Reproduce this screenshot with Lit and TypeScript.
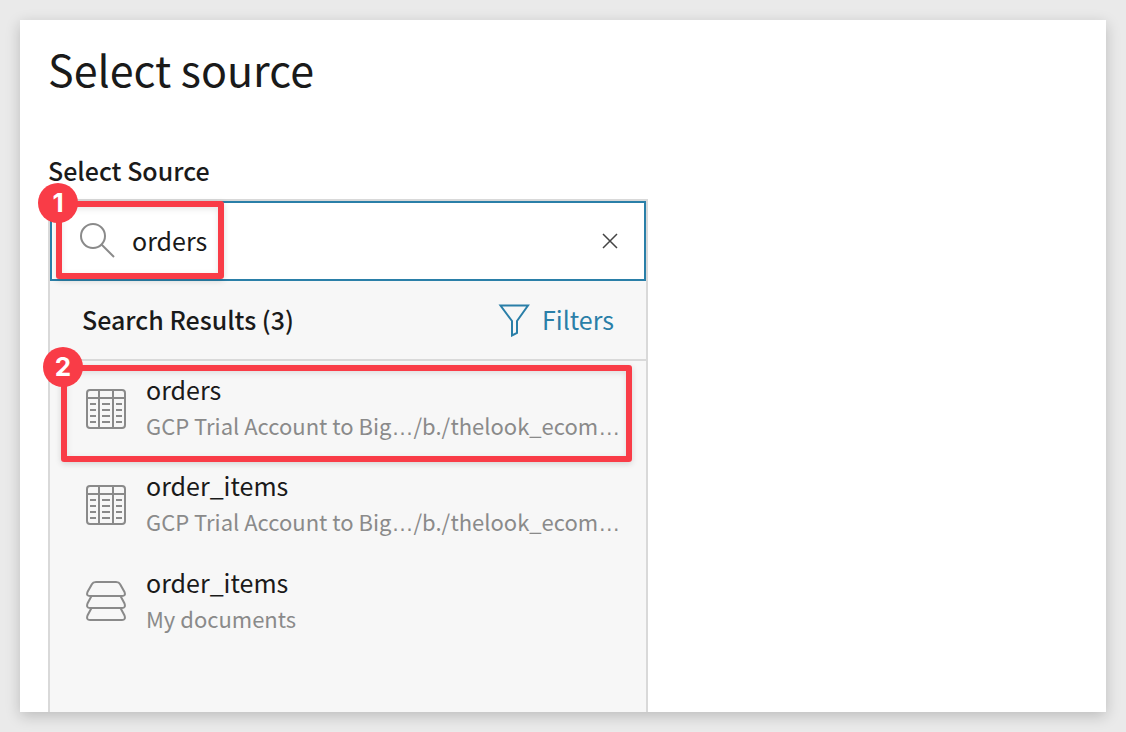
import { LitElement, html, css, svg } from "lit";
import { customElement, property, state } from "lit/decorators.js";

type Kind = "table" | "dataset";

interface Source {
  kind: Kind;
  name: string;
  location: string;
}

const SOURCES: Source[] = [
  { kind: "table", name: "orders", location: "GCP Trial Account to Big…/b./thelook_ecom…" },
  { kind: "table", name: "order_items", location: "GCP Trial Account to Big…/b./thelook_ecom…" },
  { kind: "dataset", name: "order_items", location: "My documents" },
];

const tableIcon = svg`
  <rect x="1" y="1" width="38" height="38" rx="3" />
  <path d="M1 9H39M13 1V39M27 1V39" />
  <path d="M4 15H10M4 21H10M4 27H10M4 33H10M16 15H24M16 21H24M16 27H24M16 33H24M30 15H36M30 21H36M30 27H36M30 33H36" />`;

const datasetIcon = svg`
  <path d="M10 1H30Q33 1 34 3L38.500 11Q40 15 36 15H4Q0 15 1.500 11L6 3Q7 1 10 1Z" />
  <path d="M5.500 15L1.500 22.500Q0 27 4 27H36Q40 27 38.500 22.500L34.500 15" />
  <path d="M5.500 27L1.500 34.500Q0 39 4 39H36Q40 39 38.500 34.500L34.500 27" />`;

@customElement("source-row")
export class SourceRow extends LitElement {
  @property({ attribute: false }) source!: Source;

  static styles = css`
    :host { display: block; }
    .row {
      display: flex;
      align-items: center;
      gap: 20px;
      width: 100%;
      height: 96px;
      box-sizing: border-box;
      padding: 0 28px 0 36px;
      border: 0;
      background: none;
      font: inherit;
      color: inherit;
      text-align: left;
      cursor: pointer;
    }
    .icon { flex: none; width: 40px; height: 40px; fill: none; stroke: #8a8a8a; stroke-width: 2; }
    .text { flex: 1; min-width: 0; display: flex; flex-direction: column; padding-bottom: 2px; }
    .name { font-size: 25px; line-height: 36px; }
    .location {
      font-size: 22px;
      line-height: 36px;
      color: #8a8a8a;
      white-space: nowrap;
    }
    .dots { font-family: "Liberation Sans", sans-serif; }
  `;

  render() {
    const parts = this.source.location.split(/(…)/);
    return html`
      <button class="row" type="button">
        <svg class="icon" viewBox="0 0 40 40" aria-hidden="true">
          ${this.source.kind === "table" ? tableIcon : datasetIcon}
        </svg>
        <span class="text">
          <span class="name">${this.source.name}</span>
          <span class="location">${parts.map((p) => (p === "…" ? html`<span class="dots">…</span>` : p))}</span>
        </span>
      </button>
    `;
  }
}

@customElement("app-root")
export class AppRoot extends LitElement {
  @state() private query = "orders";

  static styles = css`
    :host {
      display: flex;
      box-sizing: border-box;
      min-height: 100vh;
      padding: 20px;
      background: #eaeaea;
      color: #1a1a1a;
      font-family: "Noto Sans CJK SC", sans-serif;
    }
    .card {
      flex: 1;
      display: flex;
      flex-direction: column;
      min-width: 0;
      padding: 18px 28px 0;
      background: #fff;
      box-shadow: 0 4px 14px rgba(0, 0, 0, 0.2);
    }
    .title { margin: 0; font-size: 43px; line-height: 60px; font-weight: 400; }
    .label { margin-top: 54px; font-size: 25px; line-height: 36px; font-weight: 500; }
    .picker {
      position: relative;
      flex: 1;
      display: flex;
      flex-direction: column;
      margin-top: 11px;
      width: 100%;
      max-width: 600px;
      box-sizing: border-box;
      border: 2px solid #d9d9d9;
      border-bottom: 0;
      background: #f7f7f7;
    }
    .search {
      display: flex;
      align-items: center;
      gap: 16px;
      height: 80px;
      box-sizing: border-box;
      padding: 0 24px 0 28px;
      border: 2px solid #2a7fa8;
      background: #fff;
    }
    .lens { flex: none; width: 36px; height: 36px; fill: none; stroke: #8a8a8a; stroke-width: 2; }
    .field {
      flex: 1;
      min-width: 0;
      padding: 0 0 2px;
      border: 0;
      outline: 0;
      background: none;
      color: inherit;
      font: inherit;
      font-size: 25px;
      line-height: 36px;
    }
    .clear { display: flex; padding: 2px; border: 0; background: none; cursor: pointer; }
    .cross { width: 16px; height: 16px; fill: none; stroke: #444; stroke-width: 1.5; }
    .head {
      display: flex;
      align-items: center;
      justify-content: space-between;
      height: 80px;
      box-sizing: border-box;
      padding: 0 32px;
      border-bottom: 2px solid #d9d9d9;
    }
    .count { margin: 0; padding-bottom: 2px; font-size: 25px; line-height: 36px; font-weight: 500; }
    .filters {
      display: flex;
      align-items: center;
      gap: 12px;
      padding: 0;
      border: 0;
      background: none;
      color: #2a7fa8;
      font: inherit;
      font-size: 25px;
      line-height: 36px;
      cursor: pointer;
    }
    .filters-text { padding-bottom: 2px; }
    .funnel { width: 32px; height: 34px; fill: none; stroke: currentColor; stroke-width: 2; }
    .list { list-style: none; margin: 0; padding: 0; }
    .callout {
      position: absolute;
      box-sizing: border-box;
      border: 6px solid #f93c47;
      border-radius: 3px;
      box-shadow: 0 2px 6px rgba(0, 0, 0, 0.14), inset 0 2px 6px rgba(0, 0, 0, 0.1);
      pointer-events: none;
    }
    .first { left: 6px; top: 0; width: 168px; height: 78px; }
    .second { left: 11px; right: 14px; top: 164px; height: 97px; }
    .badge {
      position: absolute;
      left: -24px;
      top: -24px;
      width: 40px;
      height: 40px;
      border-radius: 50%;
      background: #f93c47;
      color: #fff;
      font: 700 26px/40px Inter, sans-serif;
      text-align: center;
    }
  `;

  private onInput(e: Event) {
    this.query = (e.target as HTMLInputElement).value;
  }

  private clear() {
    this.query = "";
  }

  render() {
    return html`
      <main class="card">
        <h1 class="title">Select source</h1>
        <label class="label" for="source">Select Source</label>
        <div class="picker">
          <div class="search">
            <svg class="lens" viewBox="0 0 36 36" aria-hidden="true">
              <circle cx="13" cy="13" r="12" />
              <path d="M21.500 21.500L34 34" />
            </svg>
            <input class="field" id="source" type="text" autocomplete="off" .value=${this.query} @input=${this.onInput} />
            <button class="clear" type="button" aria-label="Clear" @click=${this.clear}>
              <svg class="cross" viewBox="0 0 16 16"><path d="M1 1L15 15M15 1L1 15" /></svg>
            </button>
          </div>
          <div class="head">
            <h2 class="count">Search Results (${SOURCES.length})</h2>
            <button class="filters" type="button">
              <svg class="funnel" viewBox="0 0 32 34" aria-hidden="true">
                <path d="M2.500 2.500H30L19 18V30L14 32.500V18Z" />
              </svg>
              <span class="filters-text">Filters</span>
            </button>
          </div>
          <ul class="list">
            ${SOURCES.map((s) => html`<li><source-row .source=${s}></source-row></li>`)}
          </ul>
          <div class="callout first"><span class="badge">1</span></div>
          <div class="callout second"><span class="badge">2</span></div>
        </div>
      </main>
    `;
  }
}
